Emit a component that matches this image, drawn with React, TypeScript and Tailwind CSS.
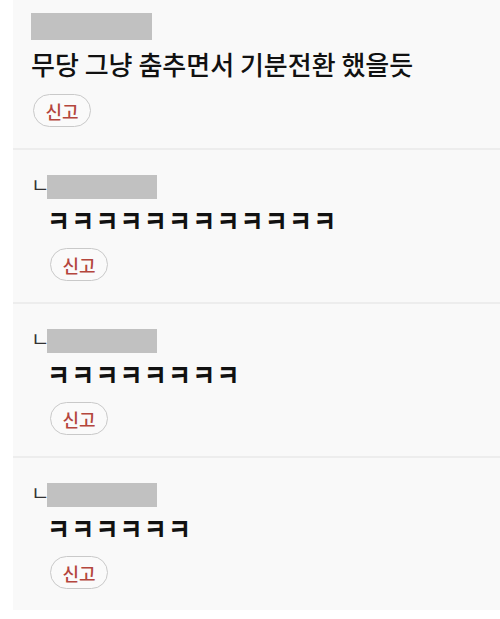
import React from 'react';

const FONT = { fontFamily: '"Noto Sans CJK KR", "Noto Sans", sans-serif' };

const ReportButton: React.FC = () => (
  <button className="w-[58px] h-[33px] rounded-full border border-[#c9c9c9] bg-[#fafafa] text-[18px] font-medium text-[#b4463d] leading-none flex items-center justify-center">
    신고
  </button>
);

const replies = ['ㅋㅋㅋㅋㅋㅋㅋㅋㅋㅋㅋㅋ', 'ㅋㅋㅋㅋㅋㅋㅋㅋ', 'ㅋㅋㅋㅋㅋㅋ'];

const App: React.FC = () => {
  return (
    <div className="w-[500px] h-[619px] bg-white pl-[13px] overflow-hidden" style={FONT}>
      <div className="bg-[#f9f9f9]">
        <div className="pl-[18px] pt-[13px] pb-[21px]">
          <div className="w-[121px] h-[27px] bg-[#c1c1c1]" />
          <p className="mt-[7px] text-[26px] leading-[34px] font-medium text-[#111]">
            무당 그냥 춤추면서 기분전환 했을듯
          </p>
          <div className="mt-[13px] pl-[2px]">
            <ReportButton />
          </div>
        </div>

        {replies.map((text, i) => (
          <div key={i} className="border-t-2 border-[#ededed] pl-[18px] pt-[25px] pb-[21px]">
            <div className="flex items-start">
              <span className="w-[16px] text-[20px] leading-[20px] text-[#333]">ㄴ</span>
              <div className="w-[110px] h-[24px] bg-[#c1c1c1]" />
            </div>
            <p className="mt-[5px] pl-[16px] text-[25px] leading-[30px] font-bold tracking-[1.2px] text-[#111] scale-y-[1.2]">
              {text}
            </p>
            <div className="mt-[14px] pl-[19px]">
              <ReportButton />
            </div>
          </div>
        ))}
      </div>
    </div>
  );
};

export default App;
